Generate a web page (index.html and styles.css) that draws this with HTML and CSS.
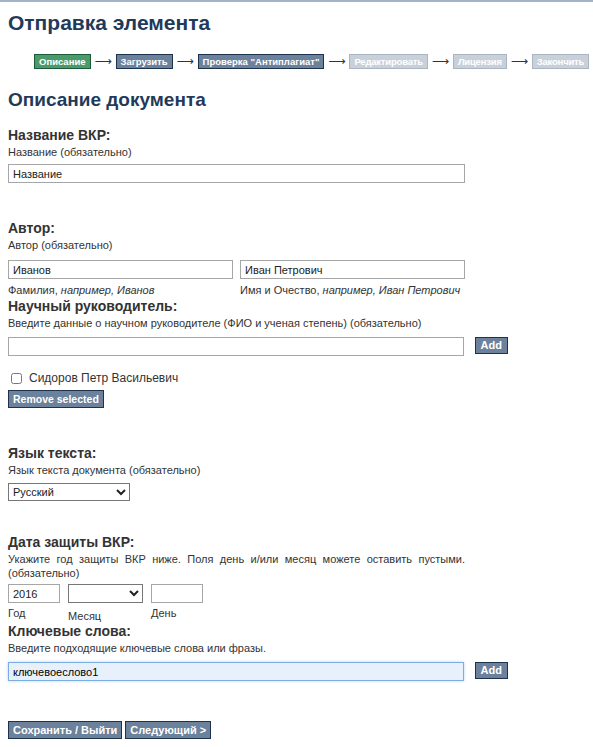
FILE: index.html
```html
<!DOCTYPE html>
<html lang="ru">
<head>
<meta charset="utf-8">
<link rel="stylesheet" href="styles.css">
</head>
<body>
<div class="topline"></div>
<div class="page">
  <h1 class="title">Отправка элемента</h1>
  <div class="steps">
    <span class="step done">Описание</span><span class="arrow">⟶</span><span class="step active">Загрузить</span><span class="arrow">⟶</span><span class="step active">Проверка "Антиплагиат"</span><span class="arrow">⟶</span><span class="step off">Редактировать</span><span class="arrow">⟶</span><span class="step off">Лицензия</span><span class="arrow">⟶</span><span class="step off">Закончить</span>
  </div>

  <h2 class="subtitle">Описание документа</h2>

  <div class="form">
    <div class="field first">
      <div class="label">Название ВКР:</div>
      <div class="hint">Название (обязательно)</div>
      <input class="text full" type="text" value="Название">
    </div>

    <div class="field gap-big">
      <div class="label">Автор:</div>
      <div class="hint">Автор (обязательно)</div>
      <div class="row2">
        <div class="col">
          <input class="text half" type="text" value="Иванов">
          <div class="sub">Фамилия, <i>например, Иванов</i></div>
        </div>
        <div class="col">
          <input class="text half" type="text" value="Иван Петрович">
          <div class="sub">Имя и Очество, <i>например, Иван Петрович</i></div>
        </div>
      </div>
    </div>

    <div class="field tight">
      <div class="label">Научный руководитель:</div>
      <div class="hint">Введите данные о научном руководителе (ФИО и ученая степень) (обязательно)</div>
      <div class="addrow sup">
        <input class="text full" type="text" value="">
        <button class="btn small">Add</button>
      </div>
      <label class="check"><input type="checkbox"> Сидоров Петр Васильевич</label>
      <button class="btn remove">Remove selected</button>
    </div>

    <div class="field gap-lang">
      <div class="label">Язык текста:</div>
      <div class="hint">Язык текста документа (обязательно)</div>
      <select class="sel lang"><option>Русский</option></select>
    </div>

    <div class="field gap-date">
      <div class="label">Дата защиты ВКР:</div>
      <div class="hint justify">Укажите год защиты ВКР ниже. Поля день и/или месяц можете оставить пустыми. (обязательно)</div>
      <div class="daterow">
        <div class="dcol">
          <input class="text year" type="text" value="2016">
          <div class="sub dl">Год</div>
        </div>
        <div class="dcol">
          <select class="sel month"><option></option></select>
          <div class="sub dl mon">Месяц</div>
        </div>
        <div class="dcol">
          <input class="text day" type="text" value="">
          <div class="sub dl">День</div>
        </div>
      </div>
    </div>

    <div class="field tight2">
      <div class="label">Ключевые слова:</div>
      <div class="hint">Введите подходящие ключевые слова или фразы.</div>
      <div class="addrow kw">
        <input class="text full focus" type="text" value="ключевоеслово1">
        <button class="btn small">Add</button>
      </div>
    </div>

    <div class="actions">
      <button class="btn big">Сохранить / Выйти</button>
      <button class="btn big">Следующий &gt;</button>
    </div>
  </div>
</div>
</body>
</html>
```

FILE: styles.css
```css
html, body {
  margin: 0;
  padding: 0;
  background: #fff;
}
body {
  font-family: "Liberation Sans", Arial, sans-serif;
  color: #333;
}
.topline {
  height: 2px;
  background: #a4b4c6;
}
.page {
  padding: 0 8px;
}
.title {
  margin: 0;
  padding-top: 8px;
  font-size: 21px;
  line-height: 26px;
  font-weight: bold;
  color: #1f3a5a;
}
.steps {
  display: flex;
  align-items: center;
  margin-top: 17px;
  padding-left: 26px;
  height: 16px;
  white-space: nowrap;
}
.step {
  flex-shrink: 0;
  display: inline-block;
  font-size: 9.5px;
  font-weight: bold;
  color: #fff;
  line-height: 13px;
  padding: 0 4px;
  border: 1px solid;
  white-space: nowrap;
}
.step.done {
  background: #4a9a6c;
  border-color: #1d5a3a;
}
.step.active {
  background: #6c819b;
  border-color: #1c324d;
}
.step.off {
  background: #c8d1da;
  border-color: #aab5c1;
  letter-spacing: -0.2px;
}
.arrow {
  flex-shrink: 0;
  font-family: "DejaVu Sans", sans-serif;
  font-size: 12px;
  color: #333;
  width: 25px;
  text-align: center;
  line-height: 14px;
}
.subtitle {
  margin: 19px 0 0;
  font-size: 19px;
  line-height: 24px;
  font-weight: bold;
  color: #1f3a5a;
}
.form {
  width: 500px;
}
.field {
  margin-top: 12px;
}
.field.first {
  margin-top: 14px;
}
.label {
  font-size: 14px;
  font-weight: bold;
  line-height: 18px;
  color: #333;
}
.hint {
  font-size: 11px;
  line-height: 14px;
  margin-top: 1px;
  color: #333;
  width: 457px;
}
.justify {
  text-align: justify;
}
.text {
  box-sizing: border-box;
  height: 19px;
  border: 1px solid #a6a6a6;
  font-family: "Liberation Sans", Arial, sans-serif;
  font-size: 11px;
  color: #222;
  padding: 0 4px;
  margin: 0;
  outline: none;
  background: #fff;
}
.field > .hint + .text {
  margin-top: 5px;
  display: block;
}
.full {
  width: 457px;
}
.half {
  width: 225px;
  display: block;
}
.row2 {
  display: flex;
  gap: 7px;
  margin-top: 8px;
}
.sub {
  font-size: 11px;
  line-height: 14px;
  margin-top: 4px;
  color: #333;
}
.gap-big {
  margin-top: 36px;
}
.tight {
  margin-top: 0;
}
.addrow {
  display: flex;
  align-items: flex-start;
  gap: 11px;
  margin-top: 8px;
}
.addrow.sup {
  margin-top: 7px;
}
.addrow.kw {
  margin-top: 7px;
}
.btn {
  font-family: "Liberation Sans", Arial, sans-serif;
  font-weight: bold;
  color: #fff;
  background: #6c819b;
  border: 1px solid #1c324d;
  margin: 0;
  cursor: pointer;
}
.btn.small {
  font-size: 11px;
  height: 17px;
  padding: 0 5px;
  line-height: 15px;
}
.check {
  display: flex;
  align-items: center;
  margin-top: 14px;
  margin-left: 3px;
  font-size: 12px;
  line-height: 16px;
  color: #333;
}
.check input {
  margin: 0 7px 0 0;
  width: 11px;
  height: 11px;
}
.remove {
  display: block;
  margin-top: 4px;
  font-size: 10.5px;
  height: 18px;
  padding: 0 4px;
}
.gap-lang {
  margin-top: 36px;
}
.gap-date {
  margin-top: 32px;
}
.sel {
  box-sizing: border-box;
  height: 18px;
  border: 1px solid #777;
  font-family: "Liberation Sans", Arial, sans-serif;
  font-size: 11px;
  color: #222;
  background: #fff;
  margin: 0;
  padding: 0;
}
.lang {
  display: block;
  width: 122px;
  margin-top: 6px;
}
.daterow {
  display: flex;
  margin-top: 4px;
  gap: 8px;
}
.dcol {
  display: flex;
  flex-direction: column;
}
.year {
  width: 52px;
}
.month {
  width: 75px;
  height: 19px;
}
.day {
  width: 52px;
}
.dl {
  margin-top: 3px;
}
.mon {
  margin-top: 6px;
}
.tight2 {
  margin-top: -1px;
}
.focus {
  background: #e8f0fc;
  border-color: #7aaee2;
  box-shadow: 0 0 3px #bcd6f3;
  color: #000;
}
.actions {
  display: flex;
  gap: 3px;
  margin-top: 40px;
}
.btn.big {
  font-size: 11px;
  height: 18px;
  padding: 0 4px;
}
```
